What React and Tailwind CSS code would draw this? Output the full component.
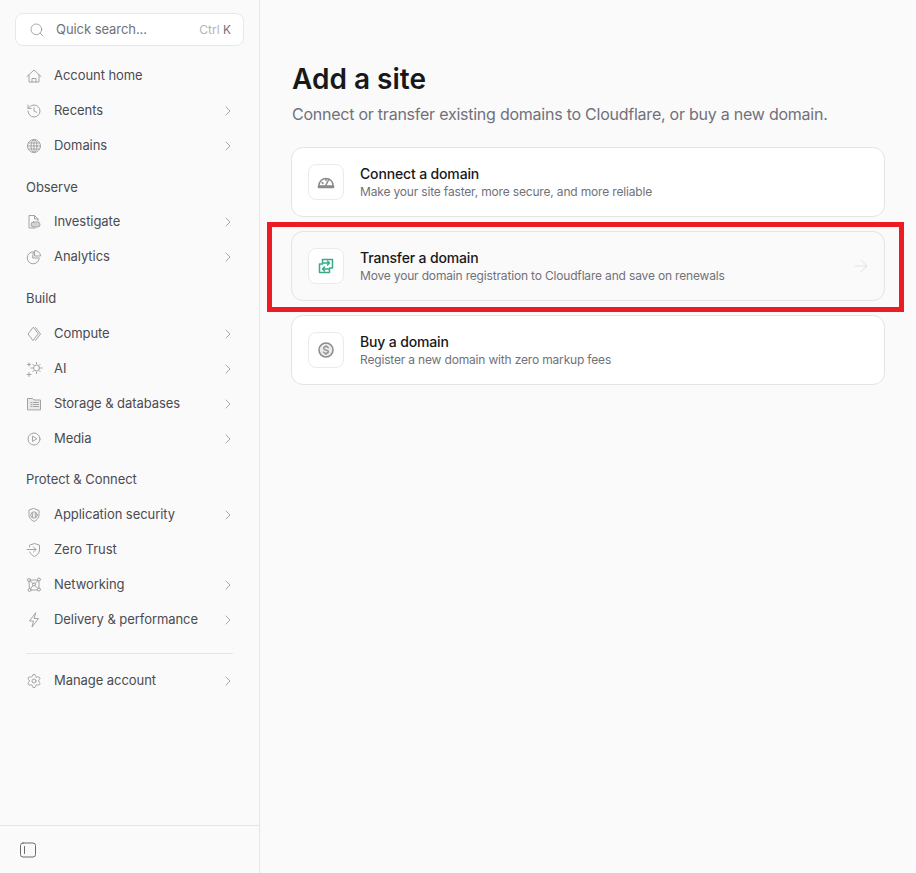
import React from "react";
import { ArrowRight, ChevronRight, History, Search, Settings } from "lucide-react";

const iconProps = {
  width: 16,
  height: 16,
  viewBox: "0 0 16 16",
  fill: "none",
  stroke: "currentColor",
  strokeWidth: 1,
  strokeLinecap: "round",
  strokeLinejoin: "round",
};

const HomeIcon = () => (
  <svg {...iconProps}>
    <path d="M1 8.500 8 2l7 6.500" />
    <path d="M3 7v7h10V7" />
    <path d="M6 14v-3.500h4V14" />
  </svg>
);

const GlobeIcon = () => (
  <svg {...iconProps}>
    <circle cx="8" cy="8" r="6.500" />
    <ellipse cx="8" cy="8" rx="3" ry="6.500" />
    <path d="M8 1.500v13M1.500 8h13M2.500 5h11M2.500 11h11" />
  </svg>
);

const InvestigateIcon = () => (
  <svg {...iconProps}>
    <path d="M9 14H3V1.500h5.500L12 5v2" />
    <path d="M8.500 1.500V5H12" />
    <rect x="5" y="8" width="9" height="5" rx="2.500" fill="currentColor" fillOpacity="0.45" />
  </svg>
);

const AnalyticsIcon = () => (
  <svg {...iconProps}>
    <path d="M7 2.800a6 6 0 1 0 6.200 6.200H7z" />
    <path d="M9 1.500A5.500 5.500 0 0 1 14.500 7H9z" />
  </svg>
);

const ComputeIcon = () => (
  <svg {...iconProps}>
    <path d="M7 1.500 2 8l5 6.500L12 8z" />
    <path d="M9.500 1.500 14.500 8l-5 6.500" />
  </svg>
);

const AiIcon = () => (
  <svg {...iconProps} viewBox="0 0 18 18" width="18" height="18">
    <circle cx="10.500" cy="8" r="3" />
    <path d="M10.500 2.500v1.500M10.500 12v1.500M5 8h1.500M14.500 8H16M6.800 4.300l1 1M13.200 10.700l1 1M14.200 4.300l-1 1M7.800 10.700l-1 1" />
    <path d="M3 3v3M1.500 4.500h3M3 12.500v4M1 14.500h4" />
  </svg>
);

const StorageIcon = () => (
  <svg {...iconProps}>
    <path d="M1.500 13.500V2.500h5l1.500 1.500h6.500v9.500z" fill="currentColor" fillOpacity="0.18" />
    <path d="M5 6.500h1M5 8.500h1M5 10.500h1M7.500 6.500h5M7.500 8.500h5M7.500 10.500h5" />
  </svg>
);

const MediaIcon = () => (
  <svg {...iconProps}>
    <circle cx="8" cy="8" r="6" />
    <path d="M6.500 5.500v5L10.500 8z" />
  </svg>
);

const AppSecurityIcon = () => (
  <svg {...iconProps}>
    <path d="M8 1.500 13 3.500V8c0 3-2.200 5.200-5 6.500C5.200 13.200 3 11 3 8V3.500z" />
    <path d="M6.700 6v4M9.300 6v4" />
    <circle cx="8" cy="8" r="3.200" />
  </svg>
);

const ZeroTrustIcon = () => (
  <svg {...iconProps}>
    <path d="M3.500 5V3.200L8.500 1.500l5 1.700V8c0 3-2.300 5.200-5 6.500C6.300 13.500 4.600 12 3.800 10" />
    <path d="M1 7.500h9M7.500 5l2.500 2.500L7.500 10" />
  </svg>
);

const NetworkingIcon = () => (
  <svg {...iconProps}>
    <circle cx="3" cy="3" r="1.500" />
    <circle cx="13" cy="2.500" r="1.500" />
    <circle cx="3.500" cy="13" r="1.500" />
    <circle cx="13" cy="12.500" r="1.500" />
    <circle cx="8" cy="7.500" r="1.500" />
    <path d="M4.500 3h7M3 4.500l.4 7M5 13h6.500M13 4v7M4 4l3 2.500M12 3.500 9 6.500M9 8.500l3 3M7 8.500l-2.500 3.300" />
  </svg>
);

const BoltIcon = () => (
  <svg {...iconProps}>
    <path d="M9.500 1 3.500 9h4L6 15l6.500-8.500h-4z" />
  </svg>
);

const PanelIcon = () => (
  <svg width="16" height="16" viewBox="0 0 16 16" fill="none" stroke="currentColor" strokeWidth="1" strokeLinecap="round">
    <rect x="0.500" y="1" width="15" height="14" rx="2.500" />
    <path d="M4.500 4.500v7" />
  </svg>
);

const SpeedIcon = () => (
  <svg width="20" height="20" viewBox="0 0 20 20" fill="none" stroke="currentColor" strokeWidth="1.500" strokeLinecap="round" strokeLinejoin="round">
    <path d="M3 15v-1.500a7 7 0 0 1 14 0V15" />
    <path d="M9 15 12.500 8" />
    <path d="M6 10.500l1 1M10 7.500v1" />
    <path d="M2.500 14h15v1.500h-15z" fill="currentColor" />
  </svg>
);

const TransferIcon = () => (
  <svg width="20" height="20" viewBox="0 0 20 20" fill="none" stroke="currentColor" strokeWidth="1.500" strokeLinecap="round" strokeLinejoin="round">
    <path d="M6.500 7V3.500h10V12H13.500" />
    <path d="M7 7h6.500M11.500 5l2 2-2 2" />
    <path d="M13.500 13v3.500h-10V8H6.500" />
    <path d="M13 13H6.500M8.500 11l-2 2 2 2" />
  </svg>
);

const DollarIcon = () => (
  <svg width="20" height="20" viewBox="0 0 20 20" fill="none" stroke="currentColor" strokeLinecap="round" strokeLinejoin="round">
    <circle cx="10" cy="10" r="7" strokeWidth="1.500" fill="currentColor" fillOpacity="0.18" />
    <path d="M12.300 7.800C12 7 11.100 6.700 10 6.700c-1.300 0-2.300.6-2.300 1.700 0 2.400 4.700 1 4.700 3.200 0 1.100-1 1.700-2.400 1.700-1.200 0-2.200-.4-2.500-1.300M10 5.500v1.200M10 13.300v1.200" strokeWidth="1.200" />
  </svg>
);

const NavRow = ({ icon, label, chevron = true }) => (
  <div className="flex h-[35px] items-center pl-[26px] pr-[23px]">
    <span className="flex w-[28px] shrink-0 items-center text-[#a3a3a3]">{icon}</span>
    <span className="flex-1 text-[13px] tracking-[-0.06px] text-[#4b4b52]">{label}</span>
    {chevron && <ChevronRight size={16} strokeWidth={1.25} className="text-[#969696]" />}
  </div>
);

const SectionLabel = ({ children, className }) => (
  <div className={`pl-[26px] text-[13px] leading-[18px] tracking-[-0.06px] text-[#4b4b52] ${className}`}>
    {children}
  </div>
);

const DomainCard = ({ icon, title, description, hover }) => (
  <div
    className={`flex h-[70px] items-center rounded-xl border border-[#e4e4e4] pl-4 pr-[13px] ${
      hover ? "bg-[#fafafa]" : "bg-white"
    }`}
  >
    <div
      className={`flex h-[36px] w-[36px] shrink-0 items-center justify-center rounded-lg border border-[#ebebeb] bg-white ${
        hover ? "text-[#36ab86]" : "text-[#8a8a8a]"
      }`}
    >
      {icon}
    </div>
    <div className="ml-4 flex-1">
      <div className="text-sm leading-[18px] font-medium tracking-[-0.15px] text-[#18181b]">{title}</div>
      <div className="text-xs leading-[17px] tracking-[-0.17px] text-[#71717a]">{description}</div>
    </div>
    {hover && <ArrowRight size={20} strokeWidth={1} className="text-[#dedede]" />}
  </div>
);

const App = () => {
  return (
    <div className="relative flex h-[873px] w-[916px] overflow-hidden bg-[#fafafa] font-['Inter',sans-serif]">
      <aside className="flex w-[260px] shrink-0 flex-col border-r border-[#e6e6e6]">
        <div className="flex-1 pt-[13px]">
          <div className="mx-[15px] mb-[12px] flex h-[33px] w-[229px] items-center rounded-lg border border-[#e8e8e8] bg-white pl-[13px] pr-[12px]">
            <Search size={16} strokeWidth={1.25} className="text-[#969696]" />
            <span className="ml-[11px] flex-1 text-[13px] tracking-[-0.06px] text-[#71717a]">Quick search...</span>
            <span className="text-xs text-[#b4b4b8]">
              Ctrl <span className="text-[#71717a]">K</span>
            </span>
          </div>

          <NavRow icon={<HomeIcon />} label="Account home" chevron={false} />
          <NavRow icon={<History size={16} strokeWidth={1.5} />} label="Recents" />
          <NavRow icon={<GlobeIcon />} label="Domains" />

          <SectionLabel className="mt-[15px] mb-[8px]">Observe</SectionLabel>
          <NavRow icon={<InvestigateIcon />} label="Investigate" />
          <NavRow icon={<AnalyticsIcon />} label="Analytics" />

          <SectionLabel className="mt-[15px] mb-[9px]">Build</SectionLabel>
          <NavRow icon={<ComputeIcon />} label="Compute" />
          <NavRow icon={<AiIcon />} label="AI" />
          <NavRow icon={<StorageIcon />} label="Storage & databases" />
          <NavRow icon={<MediaIcon />} label="Media" />

          <SectionLabel className="mt-[14px] mb-[9px]">Protect & Connect</SectionLabel>
          <NavRow icon={<AppSecurityIcon />} label="Application security" />
          <NavRow icon={<ZeroTrustIcon />} label="Zero Trust" chevron={false} />
          <NavRow icon={<NetworkingIcon />} label="Networking" />
          <NavRow icon={<BoltIcon />} label="Delivery & performance" />

          <div className="mx-[26px] mt-4 mb-[9px] h-px bg-[#e6e6e6]" />
          <NavRow icon={<Settings size={16} strokeWidth={1.5} />} label="Manage account" />
        </div>

        <div className="flex h-[48px] items-center border-t border-[#e6e6e6] pl-[20px] text-[#6b6b6b]">
          <PanelIcon />
        </div>
      </aside>

      <main className="flex-1 pl-[31px] pr-[31px] pt-[61px]">
        <div className="pl-px">
          <h1 className="text-[28px] leading-9 font-semibold text-[#18181b]">Add a site</h1>
          <p className="mt-[5px] text-base leading-6 tracking-[-0.24px] text-[#71717a]">
            Connect or transfer existing domains to Cloudflare, or buy a new domain.
          </p>
        </div>
        <div className="mt-[21px] flex flex-col gap-[14px]">
          <DomainCard
            icon={<SpeedIcon />}
            title="Connect a domain"
            description="Make your site faster, more secure, and more reliable"
          />
          <DomainCard
            hover
            icon={<TransferIcon />}
            title="Transfer a domain"
            description="Move your domain registration to Cloudflare and save on renewals"
          />
          <DomainCard
            icon={<DollarIcon />}
            title="Buy a domain"
            description="Register a new domain with zero markup fees"
          />
        </div>
      </main>

      {/* annotation box drawn over the page */}
      <div className="absolute left-[267px] top-[222px] h-[90px] w-[637px] border-[5px] border-[#ed1c24]" />
    </div>
  );
};

export default App;
